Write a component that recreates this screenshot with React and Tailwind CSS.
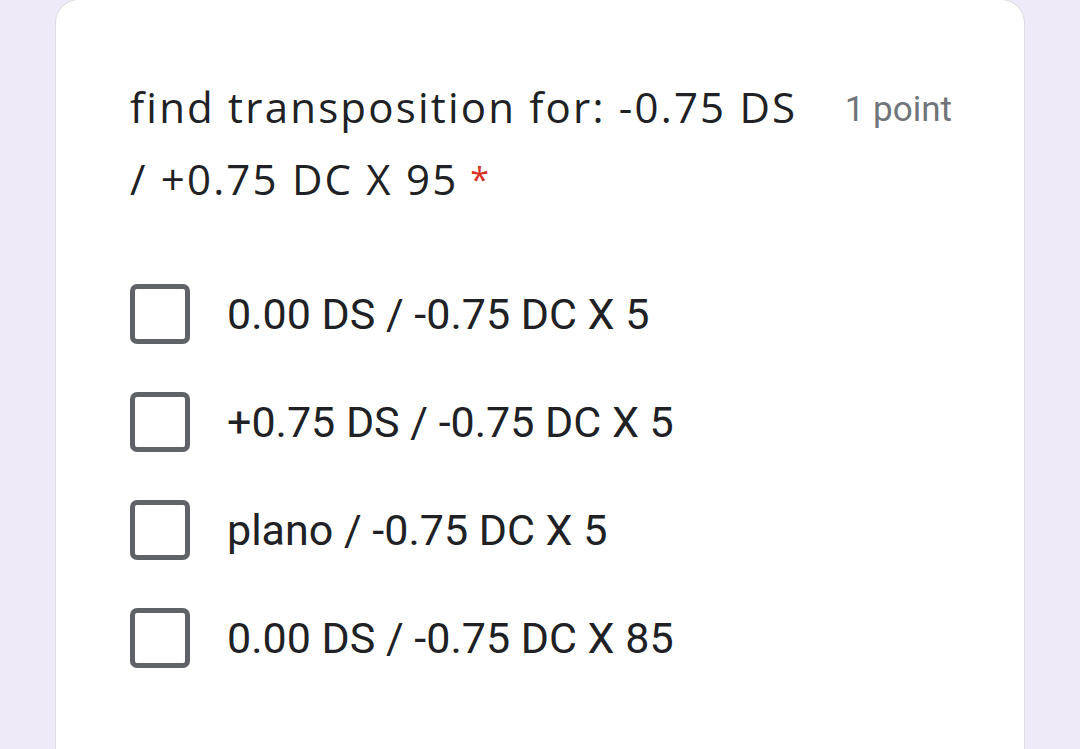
const options = [
  '0.00 DS / -0.75 DC X 5',
  '+0.75 DS / -0.75 DC X 5',
  'plano / -0.75 DC X 5',
  '0.00 DS / -0.75 DC X 85',
]

export default function App() {
  return (
    <div className="min-h-[749px] bg-[#efeaf8] px-[55px] overflow-hidden" style={{ fontFamily: 'Roboto, sans-serif' }}>
      <div className="bg-white border border-[#dadce0] rounded-b-none rounded-t-[24px] h-[760px] -mt-px pl-[74px] pr-[72px] pt-[76px]">
        {/* Question title */}
        <div className="flex items-start justify-between">
          <div className="w-[685px] text-[42px] leading-[72px] tracking-[2.2px] text-[#202124] -mt-[5px]" style={{ fontFamily: '"Open Sans", Roboto, sans-serif' }}>
            find transposition for: -0.75 DS / +0.75 DC X 95
            <span className="text-[#d93025] text-[34px] ml-3 align-top">*</span>
          </div>
          <div className="text-[35px] text-[#70757a] whitespace-nowrap pt-[8px]">1 point</div>
        </div>

        {/* Options */}
        <div className="mt-[69px] flex flex-col gap-[48px]">
          {options.map(opt => (
            <label key={opt} className="flex items-center gap-[37px]">
              <span className="w-[60px] h-[60px] border-[5px] border-[#5f6368] rounded-[7px] shrink-0" />
              <span className="text-[43px] text-[#202124] leading-[60px]">{opt}</span>
            </label>
          ))}
        </div>
      </div>
    </div>
  )
}
